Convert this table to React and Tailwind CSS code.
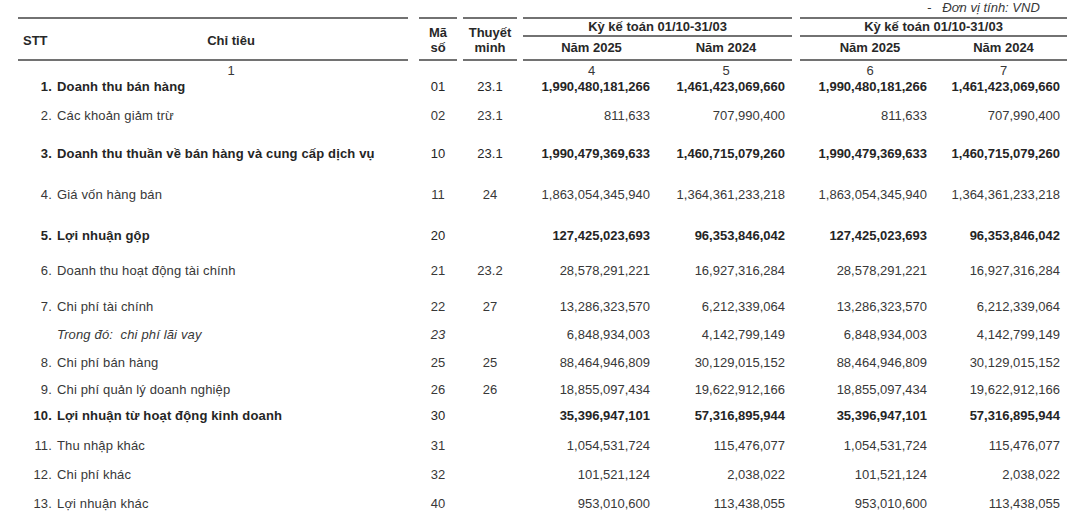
import React from "react";

const rows = [
  { no: "1.", label: "Doanh thu bán hàng", ma: "01", tm: "23.1", v: ["1,990,480,181,266", "1,461,423,069,660", "1,990,480,181,266", "1,461,423,069,660"], bold: true, h: "h-[29px]" },
  { no: "2.", label: "Các khoản giảm trừ", ma: "02", tm: "23.1", v: ["811,633", "707,990,400", "811,633", "707,990,400"], h: "h-[38px]" },
  { no: "3.", label: "Doanh thu thuần về bán hàng và cung cấp dịch vụ", ma: "10", tm: "23.1", v: ["1,990,479,369,633", "1,460,715,079,260", "1,990,479,369,633", "1,460,715,079,260"], bold: true, h: "h-[41px]" },
  { no: "4.", label: "Giá vốn hàng bán", ma: "11", tm: "24", v: ["1,863,054,345,940", "1,364,361,233,218", "1,863,054,345,940", "1,364,361,233,218"], h: "h-[41px]" },
  { no: "5.", label: "Lợi nhuận gộp", ma: "20", tm: "", v: ["127,425,023,693", "96,353,846,042", "127,425,023,693", "96,353,846,042"], bold: true, h: "h-[35px]" },
  { no: "6.", label: "Doanh thu hoạt động tài chính", ma: "21", tm: "23.2", v: ["28,578,291,221", "16,927,316,284", "28,578,291,221", "16,927,316,284"], h: "h-[36px]" },
  { no: "7.", label: "Chi phí tài chính", ma: "22", tm: "27", v: ["13,286,323,570", "6,212,339,064", "13,286,323,570", "6,212,339,064"], h: "h-[28px]" },
  { no: "", label: "Trong đó:\u00a0\u00a0chi phí lãi vay", ma: "23", tm: "", v: ["6,848,934,003", "4,142,799,149", "6,848,934,003", "4,142,799,149"], italic: true, h: "h-[28px]" },
  { no: "8.", label: "Chi phí bán hàng", ma: "25", tm: "25", v: ["88,464,946,809", "30,129,015,152", "88,464,946,809", "30,129,015,152"], h: "h-[27px]" },
  { no: "9.", label: "Chi phí quản lý doanh nghiệp", ma: "26", tm: "26", v: ["18,855,097,434", "19,622,912,166", "18,855,097,434", "19,622,912,166"], h: "h-[26px]" },
  { no: "10.", label: "Lợi nhuận từ hoạt động kinh doanh", ma: "30", tm: "", v: ["35,396,947,101", "57,316,895,944", "35,396,947,101", "57,316,895,944"], bold: true, h: "h-[30px]" },
  { no: "11.", label: "Thu nhập khác", ma: "31", tm: "", v: ["1,054,531,724", "115,476,077", "1,054,531,724", "115,476,077"], h: "h-[29px]" },
  { no: "12.", label: "Chi phí khác", ma: "32", tm: "", v: ["101,521,124", "2,038,022", "101,521,124", "2,038,022"], h: "h-[29px]" },
  { no: "13.", label: "Lợi nhuận khác", ma: "40", tm: "", v: ["953,010,600", "113,438,055", "953,010,600", "113,438,055"], h: "h-[19px]" },
];

const Line = () => <div className="h-[2px] w-full bg-[#727272]"></div>;

const App = () => {
  return (
    <div
      className="w-[1090px] h-[524px] bg-white text-[13px] leading-[16px] text-[#383838] overflow-hidden"
      style={{ fontFamily: '"Liberation Sans", Arial, sans-serif' }}
    >
      {/* don vi tinh */}
      <div className="h-[17px] flex items-start pl-[927px] gap-[11px] italic">
        <span>-</span>
        <span>Đơn vị tính: VND</span>
      </div>

      {/* header */}
      <div className="flex pl-[18px] font-bold text-[#282828]">
        <div className="w-[390px] flex flex-col">
          <Line />
          <div className="h-[40px] flex items-center pt-[3px]">
            <div className="w-[42px] pl-[5px]">STT</div>
            <div className="w-[342px] text-center">Chỉ tiêu</div>
          </div>
          <Line />
        </div>
        <div className="w-[38px] ml-[11px] flex flex-col">
          <Line />
          <div className="h-[40px] flex flex-col items-center justify-center leading-[15px] pt-[2px]">
            <span>Mã</span>
            <span>số</span>
          </div>
          <Line />
        </div>
        <div className="w-[54px] ml-[6px] flex flex-col">
          <Line />
          <div className="h-[40px] flex flex-col items-center justify-center leading-[15px] pt-[2px]">
            <span>Thuyết</span>
            <span>minh</span>
          </div>
          <Line />
        </div>
        <div className="w-[269px] ml-[6px] flex flex-col">
          <Line />
          <div className="h-[16px] text-center">Kỳ kế toán 01/10-31/03</div>
          <Line />
          <div className="h-[22px] flex items-center">
            <div className="w-[137px] text-center">Năm 2025</div>
            <div className="w-[132px] text-center">Năm 2024</div>
          </div>
          <Line />
        </div>
        <div className="w-[267px] ml-[8px] flex flex-col">
          <Line />
          <div className="h-[16px] text-center">Kỳ kế toán 01/10-31/03</div>
          <Line />
          <div className="h-[22px] flex items-center">
            <div className="w-[140px] text-center">Năm 2025</div>
            <div className="w-[127px] text-center">Năm 2024</div>
          </div>
          <Line />
        </div>
      </div>

      {/* column numbers */}
      <div className="flex pl-[18px] h-[18px] pt-[2px]">
        <div className="w-[390px] flex">
          <div className="w-[42px]"></div>
          <div className="w-[342px] text-center">1</div>
        </div>
        <div className="w-[38px] ml-[11px]"></div>
        <div className="w-[54px] ml-[6px]"></div>
        <div className="w-[137px] ml-[6px] text-center">4</div>
        <div className="w-[132px] text-center">5</div>
        <div className="w-[140px] ml-[8px] text-center">6</div>
        <div className="w-[127px] text-center">7</div>
      </div>

      {/* rows */}
      {rows.map((r, i) => (
        <div
          key={i}
          className={`flex items-start pl-[18px] ${r.h} ${r.bold ? "text-[#252525]" : ""}`}
        >
          <div className={`w-[390px] flex tracking-[0.15px] ${r.bold ? "font-bold" : ""} ${r.italic ? "italic" : ""}`}>
            {r.italic ? (
              <span className="ml-[39px]">{r.label}</span>
            ) : (
              <>
                <span className="ml-[12px] w-[22px] text-right">{r.no}</span>
                <span className="ml-[5px]">{r.label}</span>
              </>
            )}
          </div>
          <div className={`w-[38px] ml-[11px] text-center ${r.italic ? "italic" : ""}`}>{r.ma}</div>
          <div className="w-[54px] ml-[6px] text-center">{r.tm}</div>
          <div className={`flex ${r.bold ? "font-bold" : ""}`}>
            <div className="w-[137px] ml-[6px] text-right pr-[10px]">{r.v[0]}</div>
            <div className="w-[132px] text-right pr-[7px]">{r.v[1]}</div>
            <div className="w-[140px] ml-[8px] text-right pr-[13px]">{r.v[2]}</div>
            <div className="w-[127px] text-right pr-[7px]">{r.v[3]}</div>
          </div>
        </div>
      ))}
    </div>
  );
};

export default App;
